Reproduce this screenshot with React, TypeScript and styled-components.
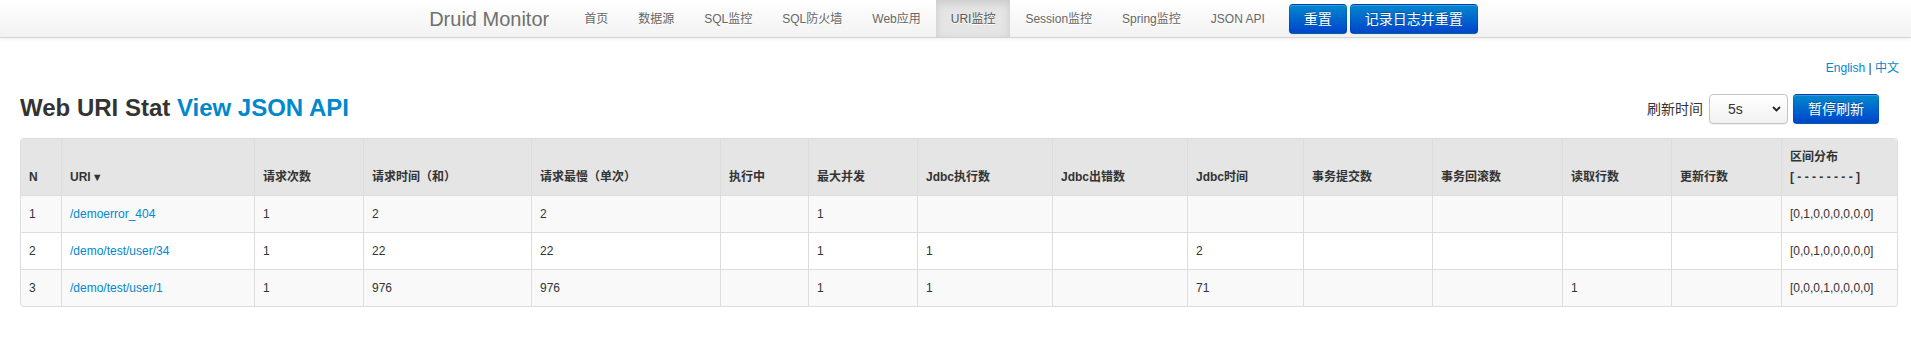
import React from 'react';
import styled, { createGlobalStyle, css } from 'styled-components';

const GlobalStyle = createGlobalStyle`
  html, body { margin: 0; padding: 0; background: #fff; }
  body {
    font-family: "Liberation Sans", "Noto Sans CJK SC", sans-serif;
    font-size: 12px;
    line-height: 20px;
    color: #333;
  }
`;

const Navbar = styled.header`
  box-sizing: border-box;
  height: 38px;
  background: linear-gradient(to bottom, #ffffff, #f2f2f2);
  border-bottom: 1px solid #d4d4d4;
  box-shadow: 0 1px 4px rgba(0, 0, 0, 0.065);
  display: flex;
  justify-content: center;
`;

const NavInner = styled.div`
  display: flex;
  align-items: stretch;
  margin-right: 4px;
`;

const Brand = styled.a`
  display: flex;
  align-items: center;
  padding-right: 20px;
  font-size: 20px;
  font-weight: 200;
  color: #707070;
  text-decoration: none;
`;

const NavList = styled.ul`
  display: flex;
  list-style: none;
  margin: 0;
  padding: 0;
`;

const NavItem = styled.li<{ $active?: boolean }>`
  display: flex;
  align-items: center;
  padding: 0 15px;
  font-size: 12px;
  color: #666;
  text-shadow: 0 1px 0 #fff;
  ${(p) =>
    p.$active &&
    css`
      background: #e5e5e5;
      color: #555;
      box-shadow: inset 0 3px 8px rgba(0, 0, 0, 0.125);
    `}
`;

const NavActions = styled.div`
  display: flex;
  align-items: center;
  gap: 3px;
  margin-left: 9px;
`;

const PrimaryButton = styled.button`
  box-sizing: border-box;
  height: 30px;
  padding: 4px 14px;
  font-family: "Liberation Sans", "Noto Sans CJK SC", sans-serif;
  font-size: 14px;
  line-height: 20px;
  color: #fff;
  text-shadow: 0 -1px 0 rgba(0, 0, 0, 0.25);
  background: linear-gradient(to bottom, #0088cc, #0044cc);
  border: 1px solid rgba(0, 0, 0, 0.1);
  border-bottom-color: rgba(0, 0, 0, 0.25);
  border-radius: 4px;
  box-shadow: inset 0 1px 0 rgba(255, 255, 255, 0.2), 0 1px 2px rgba(0, 0, 0, 0.05);
  cursor: pointer;
  white-space: nowrap;
`;

const Main = styled.main`
  padding: 20px 13px 0 20px;
`;

const LangBar = styled.div`
  text-align: right;
  font-size: 12px;
  line-height: 20px;
  margin-right: -1px;
`;

const Link = styled.a`
  color: #0088cc;
  text-decoration: none;
`;

const TitleRow = styled.div`
  display: flex;
  justify-content: space-between;
  align-items: center;
  height: 40px;
  margin: 10px 0;
`;

const Title = styled.h3`
  margin: 0;
  font-size: 24px;
  line-height: 40px;
  font-weight: bold;
  color: #333;
`;

const Controls = styled.div`
  display: flex;
  align-items: center;
  margin-right: 19px;
  margin-top: 2px;
`;

const ControlLabel = styled.span`
  font-size: 14px;
  color: #333;
  margin-right: 6px;
`;

const SelectWrap = styled.div`
  position: relative;
  margin-right: 5px;
`;

const Select = styled.select`
  appearance: none;
  box-sizing: border-box;
  width: 79px;
  height: 30px;
  padding: 0 0 0 18px;
  font-family: "Liberation Sans", sans-serif;
  font-size: 14px;
  color: #333;
  background: linear-gradient(to bottom, #ffffff, #f1f1f1);
  border: 1px solid #c4c4c4;
  border-radius: 4px;
  box-shadow: 0 1px 1px rgba(0, 0, 0, 0.06);
`;

const Chevron = styled.svg`
  position: absolute;
  right: 7px;
  top: 12px;
  pointer-events: none;
`;

const Table = styled.table`
  box-sizing: border-box;
  width: 100%;
  table-layout: fixed;
  border-collapse: separate;
  border-spacing: 0;
  border: 1px solid #ddd;
  border-left: 0;
  border-radius: 4px;
  font-size: 12px;
  line-height: 20px;
`;

const Col = styled.col<{ $w: number }>`
  width: ${(p) => p.$w}px;
`;

const HeadCell = styled.th`
  padding: 8px;
  text-align: left;
  vertical-align: bottom;
  font-weight: bold;
  color: #333;
  background: #e5e5e5;
  border-left: 1px solid #ddd;
  &:first-child { border-top-left-radius: 4px; }
  &:last-child { border-top-right-radius: 4px; }
`;

const Row = styled.tr`
  &:nth-child(odd) td { background: #f9f9f9; }
  &:last-child td:first-child { border-bottom-left-radius: 4px; }
  &:last-child td:last-child { border-bottom-right-radius: 4px; }
`;

const Cell = styled.td`
  padding: 8px;
  text-align: left;
  vertical-align: top;
  color: #333;
  border-left: 1px solid #ddd;
  border-top: 1px solid #ddd;
  white-space: nowrap;
`;

const SortMark = styled.span`
  font-size: 11px;
  margin-left: 1px;
`;

const widths = [41, 193, 109, 168, 189, 88, 109, 135, 135, 116, 129, 130, 109, 110, 116];

const headers = [
  'N',
  'URI',
  '请求次数',
  '请求时间（和）',
  '请求最慢（单次）',
  '执行中',
  '最大并发',
  'Jdbc执行数',
  'Jdbc出错数',
  'Jdbc时间',
  '事务提交数',
  '事务回滚数',
  '读取行数',
  '更新行数',
];

const rows: string[][] = [
  ['1', '/demoerror_404', '1', '2', '2', '', '1', '', '', '', '', '', '', '', '[0,1,0,0,0,0,0,0]'],
  ['2', '/demo/test/user/34', '1', '22', '22', '', '1', '1', '', '2', '', '', '', '', '[0,0,1,0,0,0,0,0]'],
  ['3', '/demo/test/user/1', '1', '976', '976', '', '1', '1', '', '71', '', '', '1', '', '[0,0,0,1,0,0,0,0]'],
];

const navItems = ['首页', '数据源', 'SQL监控', 'SQL防火墙', 'Web应用', 'URI监控', 'Session监控', 'Spring监控', 'JSON API'];

export default function App() {
  return (
    <>
      <GlobalStyle />
      <Navbar>
        <NavInner>
          <Brand href="#">Druid Monitor</Brand>
          <NavList>
            {navItems.map((n) => (
              <NavItem key={n} $active={n === 'URI监控'}>
                {n}
              </NavItem>
            ))}
          </NavList>
          <NavActions>
            <PrimaryButton>重置</PrimaryButton>
            <PrimaryButton>记录日志并重置</PrimaryButton>
          </NavActions>
        </NavInner>
      </Navbar>
      <Main>
        <LangBar>
          <Link href="#">English</Link> | <Link href="#">中文</Link>
        </LangBar>
        <TitleRow>
          <Title>
            Web URI Stat <Link href="#">View JSON API</Link>
          </Title>
          <Controls>
            <ControlLabel>刷新时间</ControlLabel>
            <SelectWrap>
              <Select defaultValue="5">
                <option value="5">5s</option>
                <option value="10">10s</option>
                <option value="20">20s</option>
                <option value="30">30s</option>
                <option value="60">60s</option>
              </Select>
              <Chevron width="9" height="6" viewBox="0 0 9 6">
                <path d="M1 1 L4.5 4.5 L8 1" fill="none" stroke="#222" strokeWidth="1.8" />
              </Chevron>
            </SelectWrap>
            <PrimaryButton>暂停刷新</PrimaryButton>
          </Controls>
        </TitleRow>
        <Table>
          <colgroup>
            {widths.map((w, i) => (
              <Col key={i} $w={w} />
            ))}
          </colgroup>
          <thead>
            <tr>
              {headers.map((h) => (
                <HeadCell key={h}>
                  {h === 'URI' ? (
                    <>
                      URI<SortMark>▼</SortMark>
                    </>
                  ) : (
                    h
                  )}
                </HeadCell>
              ))}
              <HeadCell>
                区间分布
                <br />[ - - - - - - - - ]
              </HeadCell>
            </tr>
          </thead>
          <tbody>
            {rows.map((r) => (
              <Row key={r[0]}>
                {r.map((c, i) => (
                  <Cell key={i}>{i === 1 ? <Link href="#">{c}</Link> : c}</Cell>
                ))}
              </Row>
            ))}
          </tbody>
        </Table>
      </Main>
    </>
  );
}
